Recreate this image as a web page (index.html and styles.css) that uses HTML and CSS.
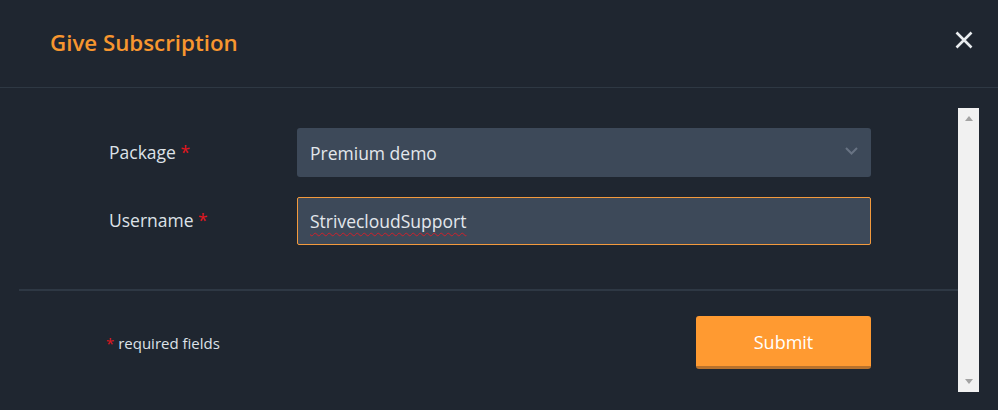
FILE: index.html
```html
<!DOCTYPE html>
<html>
<head>
	<meta http-equiv="Content-Type" content="text/html;charset=UTF-8">
	<title>Give Subscription</title>
	<link rel="stylesheet" href="styles.css">
</head>
<body>
	<div class="modal">
		<div class="modal-head">
			<h2 class="modal-title">Give Subscription</h2>
			<span class="close">
				<svg width="18" height="18" viewBox="0 0 18 18"><path d="M1.5 1.5L16.5 16.5M16.5 1.5L1.5 16.5" stroke="#e9ecef" stroke-width="2.6" fill="none"/></svg>
			</span>
		</div>
		<div class="modal-body">
			<div class="content">
				<div class="form">
					<div class="row">
						<label class="label">Package <span class="req">*</span></label>
						<div class="field select">
							<span>Premium demo</span>
							<svg width="13" height="8" viewBox="0 0 13 8"><path d="M1 1L6.5 6.5L12 1" stroke="#687383" stroke-width="2" fill="none"/></svg>
						</div>
					</div>
					<div class="row">
						<label class="label">Username <span class="req">*</span></label>
						<div class="field input"><span class="typo">StrivecloudSupport</span></div>
					</div>
				</div>
				<div class="footer">
					<div class="note"><span class="req">*</span> required fields</div>
					<button class="submit">Submit</button>
				</div>
			</div>
			<div class="scrollbar">
				<span class="arrow up"></span>
				<span class="arrow down"></span>
			</div>
		</div>
	</div>
</body>
</html>
```

FILE: styles.css
```css
*{ margin: 0; padding: 0; box-sizing: border-box; }
html, body{ height: 100%; }
body{ background: #1f2630; font-family: "Open Sans", "Liberation Sans", sans-serif; color: #dde2e8; overflow: hidden; }

.modal-head{ height: 88px; border-bottom: 1px solid #2e3843; display: flex; align-items: center; justify-content: space-between; padding: 0 25px 0 50px; }
.modal-title{ color: #f7962f; font-size: 22.3px; font-weight: 600; margin-top: -2px; }
.close{ display: flex; margin-top: -7px; }

.modal-body{ display: flex; padding-left: 19px; }
.content{ width: 939px; }
.form{ padding: 40px 0 44px 90px; border-bottom: 2px solid #2e3844; }
.row{ display: flex; align-items: center; }
.row + .row{ margin-top: 20px; }
.label{ width: 188px; font-size: 17.5px; color: #dde2e8; margin-top: -2px; }
.req{ color: #e0161f; }

.field{ width: 574px; height: 49px; background: #3d4959; border-radius: 3px; display: flex; align-items: center; justify-content: space-between; padding: 0 13px; font-size: 17.5px; color: #e3e7ec; }
.select svg{ margin-right: 0px; margin-top: -4px; }
.input{ height: 48px; border: 1px solid #f39a3d; border-radius: 2px; padding-left: 12px; }
.typo{ text-decoration: underline wavy #d0202a; text-decoration-thickness: 1px; text-underline-offset: 4px; }

.footer{ display: flex; align-items: center; justify-content: space-between; padding: 25px 87px 0 87px; }
.note{ font-size: 15px; color: #dde2e8; }
.submit{ width: 175px; height: 53px; background: #ff9a31; border: none; border-bottom: 3px solid #b9722c; border-radius: 3px; color: #fff; font-family: inherit; font-size: 18px; font-weight: 400; padding-top: 2px; }

.scrollbar{ width: 21px; height: 284px; margin-top: 20px; background: #f1f1f1; display: flex; flex-direction: column; justify-content: space-between; align-items: center; padding: 8px 0; }
.arrow{ width: 0; height: 0; border-left: 4px solid transparent; border-right: 4px solid transparent; }
.up{ border-bottom: 5px solid #a3a3a3; }
.down{ border-top: 5px solid #a3a3a3; }
```
